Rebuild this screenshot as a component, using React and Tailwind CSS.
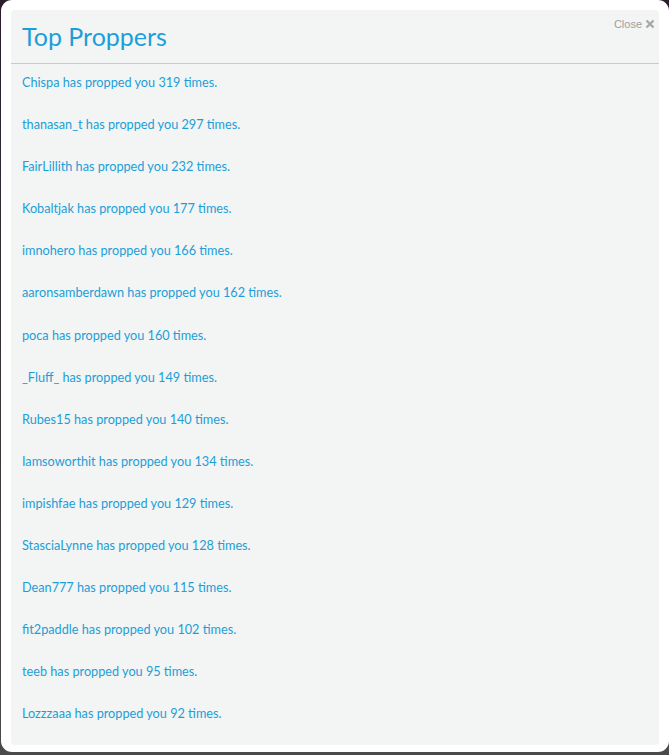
import React from "react";

const rows = [
  ["Chispa", 319],
  ["thanasan_t", 297],
  ["FairLillith", 232],
  ["Kobaltjak", 177],
  ["imnohero", 166],
  ["aaronsamberdawn", 162],
  ["poca", 160],
  ["_Fluff_", 149],
  ["Rubes15", 140],
  ["Iamsoworthit", 134],
  ["impishfae", 129],
  ["StasciaLynne", 128],
  ["Dean777", 115],
  ["fit2paddle", 102],
  ["teeb", 95],
  ["Lozzzaaa", 92],
];

export default function App() {
  return (
    <div className="w-[669px] h-[755px] bg-[#3a3a3a] bg-gradient-to-b from-[#2a1c2a] to-[#4a4a4a] overflow-hidden">
      <div className="h-[752px] ml-px bg-white rounded-[11px] pt-[10px] pl-[10px] pr-[10px]">
        <div className="w-[648px] h-[735px] bg-[#f3f4f4] rounded-[4px] relative" style={{ fontFamily: "Lato, 'Open Sans', sans-serif" }}>
          <div className="absolute right-[4px] top-[6px] flex items-center gap-[3px] text-[#a0a0a0] text-[11px]" style={{ fontFamily: "'Liberation Sans', Arial, sans-serif" }}>
            <span>Close</span>
            <svg width="10" height="10" viewBox="0 0 10 10">
              <path d="M1.5 1.5 L8.5 8.5 M8.5 1.5 L1.5 8.5" stroke="#a8a8a8" strokeWidth="2.4" strokeLinecap="butt" />
            </svg>
          </div>
          <div className="h-[54px] border-b border-[#c9cbcb] pl-[11px] pt-[9px]">
            <h1 className="text-[25px] leading-[34px] text-[#1b9fd8] font-normal">Top Proppers</h1>
          </div>
          <div className="pl-[11px] pt-[9px] flex flex-col">
            {rows.map(([n, c]) => (
              <div key={n} className="h-[42.1px] text-[12.7px] leading-[18px] text-[#1b9fd8]">
                {n} has propped you {c} times.
              </div>
            ))}
          </div>
        </div>
      </div>
    </div>
  );
}
